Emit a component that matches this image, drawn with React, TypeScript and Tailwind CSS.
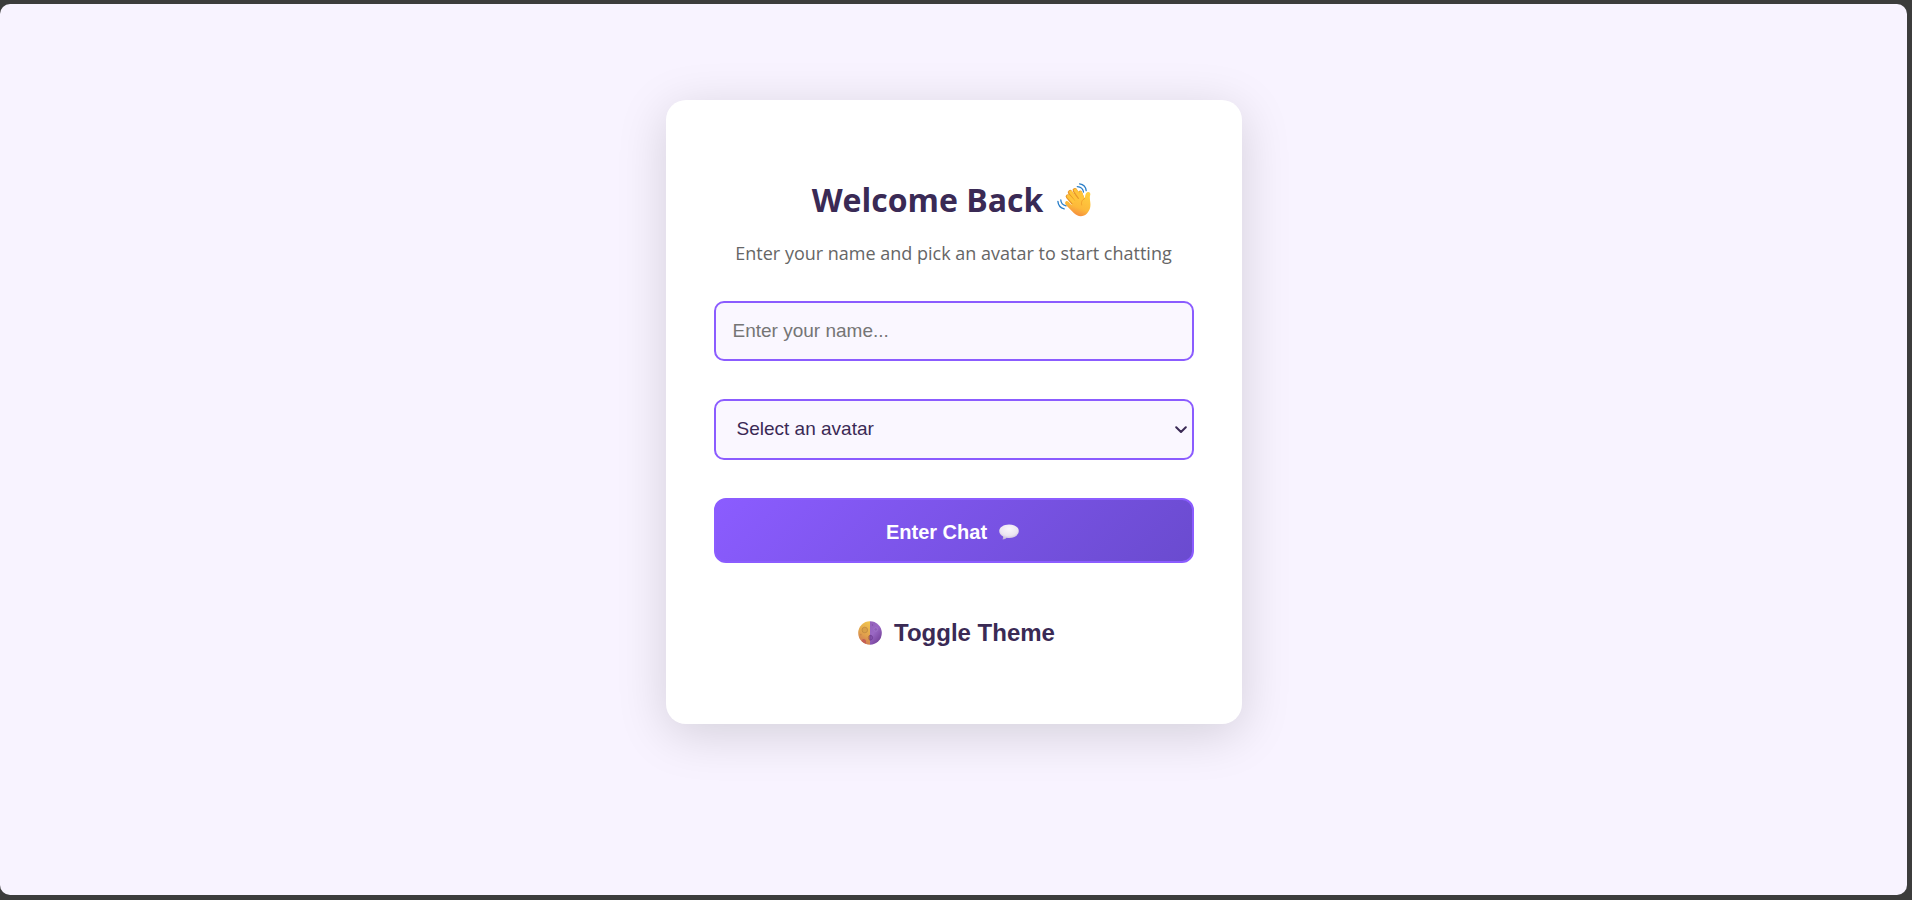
import { useState } from "react";

function WavingHand() {
  return (
    <svg viewBox="0 0 34 34" className="size-[34px]" role="img" aria-label="Waving hand">
      <defs>
        <linearGradient id="skin" x1="0.8" y1="0" x2="0.4" y2="1">
          <stop offset="0" stopColor="#ffcf3f" />
          <stop offset="0.65" stopColor="#fdb93a" />
          <stop offset="1" stopColor="#f4893f" />
        </linearGradient>
      </defs>
      <g fill="none" stroke="#e8962a" strokeLinecap="round">
        <path d="M11 13.6 L18 22" strokeWidth="4.6" />
        <path d="M13.1 9.3 L20 19" strokeWidth="4.6" />
        <path d="M17.9 7.4 L23 17" strokeWidth="4.6" />
        <path d="M23.1 9.6 L26 17" strokeWidth="4" />
      </g>
      <g fill="none" stroke="#ffc43a" strokeLinecap="round">
        <path d="M11.5 13.3 L18.5 21" strokeWidth="3.4" />
        <path d="M13.7 9.2 L21 18.5" strokeWidth="3.4" />
        <path d="M18.5 7.4 L24.5 16" strokeWidth="3.4" />
        <path d="M23.6 9.6 L27 18" strokeWidth="3" />
      </g>
      <path
        fill="url(#skin)"
        d="M9 18.2 C7.5 19.5 8 21 9.4 22.4 L16.8 30 C20.5 34 26.5 34.2 30 30.4 C33.2 27 33.8 23.5 33.3 19.5 C33 16.5 32.5 14.5 33.2 12 C33.8 9.5 31.8 8.3 30.2 9.3 C28.4 10.4 28.2 13 27.7 15.6 L24.5 14.5 L20 16.5 L16.5 19.5 L14.5 22 L11.5 18.8 C10.7 18 9.8 17.6 9 18.2 Z"
      />
      <path d="M27.7 15.5 C24.8 17 23.9 19.3 24.7 22" fill="none" stroke="#ef9d2a" strokeWidth="0.9" strokeLinecap="round" />
      <g fill="none" stroke="#2b7fc8" strokeWidth="1.3" strokeLinecap="round">
        <path d="M20.3 3.6 C23.8 3.8 26 5.8 26.5 9" />
        <path d="M22.6 0.8 C26.4 1.4 28.8 4 29.2 7.6" />
        <path d="M3.8 17 C4 20.2 5.8 22.2 9 22.8" />
        <path d="M0.9 18.4 C1.2 22.2 3.6 25 7.2 25.8" />
      </g>
    </svg>
  );
}

function SpeechBubble() {
  return (
    <svg viewBox="0 0 20 16" className="h-4 w-5" aria-hidden="true">
      <defs>
        <radialGradient id="bubble" cx="0.5" cy="0.3" r="0.75">
          <stop offset="0" stopColor="#faf7fc" />
          <stop offset="0.6" stopColor="#ebe5f1" />
          <stop offset="1" stopColor="#bdaed2" />
        </radialGradient>
      </defs>
      <path
        fill="url(#bubble)"
        d="M10 0.4 C15.4 0.4 19.8 3.2 19.8 7.1 C19.8 11 15.4 14 10.2 14 C9.2 14 8.4 13.9 7.6 13.8 C6.7 14.8 5.4 15.4 3.9 15.4 C3.5 15.4 3.4 15 3.7 14.7 C4.2 14.1 4.3 13.3 4.1 12.5 C1.8 11.4 0.2 9.5 0.2 7.1 C0.2 3.2 4.6 0.4 10 0.4 Z"
      />
    </svg>
  );
}

function HalfMoon() {
  return (
    <svg viewBox="0 0 24 24" className="size-6" aria-hidden="true">
      <defs>
        <linearGradient id="lit" x1="0.6" y1="0" x2="0.3" y2="1">
          <stop offset="0" stopColor="#efc14f" />
          <stop offset="0.55" stopColor="#e0a04c" />
          <stop offset="1" stopColor="#c96f55" />
        </linearGradient>
        <linearGradient id="shade" x1="0" y1="0" x2="0.6" y2="1">
          <stop offset="0" stopColor="#9362ba" />
          <stop offset="0.5" stopColor="#9a68c4" />
          <stop offset="1" stopColor="#744099" />
        </linearGradient>
      </defs>
      <path d="M12 0.2 A11.8 11.8 0 0 0 12 23.8 Z" fill="url(#lit)" />
      <path d="M12 0.2 A11.8 11.8 0 0 1 12 23.8 Z" fill="url(#shade)" />
      <circle cx="6.8" cy="9" r="2.8" fill="#d9a048" stroke="#c08840" strokeWidth="0.8" />
      <circle cx="2.8" cy="13.6" r="0.9" fill="#cd8a45" />
      <path d="M3.5 19.8 C4.5 17 7.5 17.5 8 20 L8 22.8 C6 22.2 4.5 21 3.5 19.8 Z" fill="#c45f55" />
      <path d="M12 14.2 A2.4 2.6 0 0 0 12 19.2 Z" fill="#cb8650" stroke="#ad6843" strokeWidth="0.6" />
      <path d="M12 14.2 A2.6 2.5 0 0 1 12 19.2 Z" fill="#8552ad" stroke="#6e3d96" strokeWidth="0.8" />
      <circle cx="17.8" cy="8.4" r="1.8" fill="#8e5eb8" stroke="#a67ccc" strokeWidth="0.6" />
      <circle cx="14.5" cy="4" r="0.7" fill="#8050a8" />
    </svg>
  );
}

function Chevron() {
  return (
    <svg viewBox="0 0 12 8" className="pointer-events-none absolute top-1/2 right-[7px] h-2 w-3 -translate-y-1/2" aria-hidden="true">
      <path d="M1.2 1.2 L6 6 L10.8 1.2" fill="none" stroke="#3a2a55" strokeWidth="2" strokeLinecap="round" strokeLinejoin="round" />
    </svg>
  );
}

const avatars = ["Cat", "Dog", "Fox", "Panda"];

export default function App() {
  const [name, setName] = useState("");
  const [avatar, setAvatar] = useState("");

  return (
    <div className="flex h-screen bg-[#3c3c3c] pt-1 pr-[5px] pb-[5px] font-['Liberation_Sans',Arial,sans-serif] text-[#3a2a55]">
      <main className="flex flex-1 items-center justify-center overflow-hidden rounded-[10px] bg-[#f8f3ff] pb-[75px]">
        <form
          className="flex w-full max-w-xl flex-col rounded-[20px] bg-white px-12 pt-20 pb-[75px] shadow-[0_10px_50px_rgba(0,0,0,0.15)]"
          onSubmit={(e) => e.preventDefault()}
        >
          <h1 className="flex items-center justify-center gap-3.5 pr-1 font-['Open_Sans','Noto_Sans',sans-serif] text-[32px] leading-10 font-bold">
            Welcome Back <WavingHand />
          </h1>
          <p className="mt-[19px] text-center font-['Open_Sans','Noto_Sans',sans-serif] text-lg leading-7 text-[#666666]">
            Enter your name and pick an avatar to start chatting
          </p>
          <input
            type="text"
            aria-label="Your name"
            placeholder="Enter your name..."
            value={name}
            onChange={(e) => setName(e.target.value)}
            className="mt-[34px] h-[60px] rounded-[10px] border-2 border-[#8b5cff] bg-[#faf7ff] px-[17px] text-[19px] placeholder:text-[#757575]"
          />
          <div className="relative mt-[38px]">
            <select
              aria-label="Avatar"
              value={avatar}
              onChange={(e) => setAvatar(e.target.value)}
              className="h-[61px] w-full appearance-none rounded-[10px] border-2 border-[#8b5cff] bg-[#faf7ff] px-[21px] text-[19px]"
            >
              <option value="">Select an avatar</option>
              {avatars.map((a) => (
                <option key={a} value={a}>
                  {a}
                </option>
              ))}
            </select>
            <Chevron />
          </div>
          <button
            type="submit"
            className="mt-[38px] flex h-[65px] items-center justify-center gap-3 rounded-xl border-2 border-[#8b5cff] bg-linear-135 from-[#8b5cff] to-[#6a4bcf] pt-0.5 pr-0.5 text-xl font-bold text-white"
          >
            Enter Chat <SpeechBubble />
          </button>
          <button type="button" className="mt-[54px] flex items-center justify-center gap-3 self-center pl-1.5 text-2xl font-bold">
            <HalfMoon /> Toggle Theme
          </button>
        </form>
      </main>
    </div>
  );
}
